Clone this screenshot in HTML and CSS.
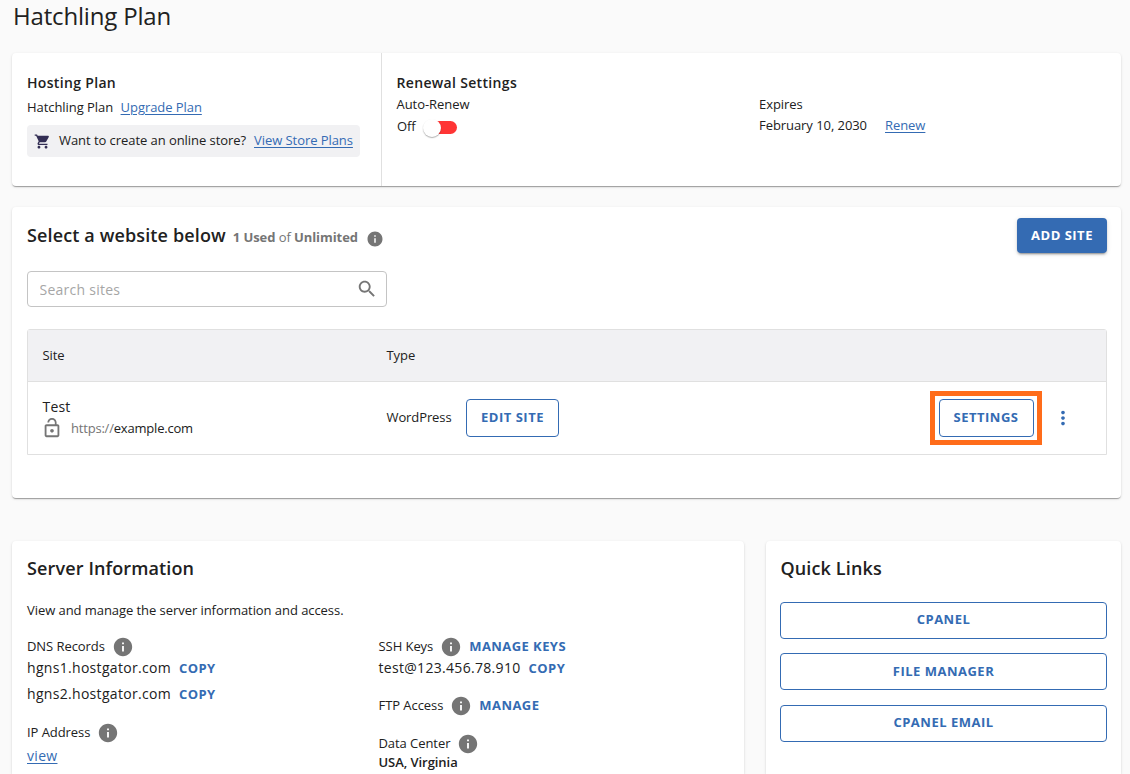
FILE: index.html
```html
<!DOCTYPE html>
<html lang="en">
<head>
<meta charset="utf-8">
<title>Hatchling Plan</title>
<link rel="stylesheet" href="styles.css">
</head>
<body>
<svg class="sprite" aria-hidden="true">
  <symbol id="info" viewBox="0 0 24 24"><path d="M12 2C6.48 2 2 6.48 2 12s4.48 10 10 10 10-4.48 10-10S17.52 2 12 2zm1 15h-2v-6h2v6zm0-8h-2V7h2v2z"/></symbol>
</svg>
<h1 class="page-title">Hatchling Plan</h1>
<main class="page">
  <section class="card plan">
    <div class="plan-hosting">
      <h3 class="subhead">Hosting Plan</h3>
      <p class="plan-name"><span>Hatchling Plan</span><a class="link" href="#">Upgrade Plan</a></p>
      <div class="store-note">
        <svg class="cart" viewBox="0 0 24 24"><path d="M7 18c-1.100 0-1.990.9-1.990 2S5.900 22 7 22s2-.9 2-2-.9-2-2-2zM1 2v2h2l3.600 7.590-1.350 2.450c-.16.28-.25.61-.25.96 0 1.100.9 2 2 2h12v-2H7.420c-.14 0-.25-.11-.25-.25l.03-.12.900-1.630h7.450c.75 0 1.410-.41 1.750-1.030l3.580-6.490c.08-.14.12-.31.12-.48 0-.55-.45-1-1-1H5.210l-.94-2H1zm16 16c-1.100 0-1.990.9-1.990 2s.89 2 1.990 2 2-.9 2-2-.9-2-2-2z"/></svg>
        <span>Want to create an online store?</span>
        <a class="link" href="#">View Store Plans</a>
      </div>
    </div>
    <div class="plan-renewal">
      <h3 class="subhead">Renewal Settings</h3>
      <div class="renewal-grid">
        <div>
          <p class="label">Auto-Renew</p>
          <div class="toggle-row"><span>Off</span><span class="toggle"><span class="thumb"></span></span></div>
        </div>
        <div>
          <p>Expires</p>
          <p class="expiry"><span>February 10, 2030</span><a class="link" href="#">Renew</a></p>
        </div>
      </div>
    </div>
  </section>

  <section class="card sites">
    <div class="sites-head">
      <h2 class="heading">Select a website below</h2>
      <span class="usage"><b>1 Used</b> of <b>Unlimited</b></span>
      <svg class="info info-sm"><use href="#info"/></svg>
      <button class="btn btn-solid">ADD SITE</button>
    </div>
    <label class="search">
      <input type="text" placeholder="Search sites">
      <svg class="search-icon" viewBox="0 0 24 24"><path d="M15.500 14h-.79l-.28-.27C15.410 12.590 16 11.110 16 9.500 16 5.910 13.090 3 9.500 3S3 5.910 3 9.500 5.910 16 9.500 16c1.610 0 3.090-.59 4.230-1.570l.27.28v.79l5 4.990L20.490 19l-4.990-5zm-6 0C7.010 14 5 11.990 5 9.500S7.010 5 9.500 5 14 7.010 14 9.500 11.990 14 9.500 14z"/></svg>
    </label>
    <div class="table">
      <div class="row row-head"><span>Site</span><span>Type</span></div>
      <div class="row row-body">
        <div class="site">
          <p class="site-name">Test</p>
          <p class="site-url">
            <svg class="lock" viewBox="0 0 24 24"><path d="M12 17c1.100 0 2-.9 2-2s-.9-2-2-2-2 .9-2 2 .9 2 2 2zm6-9h-1V6c0-2.760-2.240-5-5-5S7 3.240 7 6h1.900c0-1.710 1.390-3.100 3.100-3.100s3.100 1.390 3.100 3.100v2H6c-1.100 0-2 .9-2 2v10c0 1.100.9 2 2 2h12c1.100 0 2-.9 2-2V10c0-1.100-.9-2-2-2zm0 12H6V10h12v10z"/></svg>
            <span><span class="muted">https://</span>example.com</span>
          </p>
        </div>
        <div class="type"><span>WordPress</span><button class="btn btn-outline btn-row">EDIT SITE</button></div>
        <div class="actions">
          <div class="highlight"><button class="btn btn-outline btn-settings">SETTINGS</button></div>
          <svg class="dots" viewBox="0 0 24 24"><path d="M12 8c1.100 0 2-.9 2-2s-.9-2-2-2-2 .9-2 2 .9 2 2 2zm0 2c-1.100 0-2 .9-2 2s.9 2 2 2 2-.9 2-2-.9-2-2-2zm0 6c-1.100 0-2 .9-2 2s.9 2 2 2 2-.9 2-2-.9-2-2-2z"/></svg>
        </div>
      </div>
    </div>
  </section>

  <div class="bottom">
    <section class="card server">
      <h2 class="heading">Server Information</h2>
      <p class="intro">View and manage the server information and access.</p>
      <div class="server-grid">
        <div>
          <p class="item"><span>DNS Records</span><svg class="info"><use href="#info"/></svg></p>
          <p class="value"><span>hgns1.hostgator.com</span><a class="action">COPY</a></p>
          <p class="value value-next"><span>hgns2.hostgator.com</span><a class="action">COPY</a></p>
          <p class="item item-ip"><span>IP Address</span><svg class="info"><use href="#info"/></svg></p>
          <p class="value value-view"><a class="link" href="#">view</a></p>
        </div>
        <div>
          <p class="item"><span>SSH Keys</span><svg class="info"><use href="#info"/></svg><a class="action">MANAGE KEYS</a></p>
          <p class="value"><span class="ssh">test@123.456.78.910</span><a class="action">COPY</a></p>
          <p class="item item-ftp"><span>FTP Access</span><svg class="info"><use href="#info"/></svg><a class="action">MANAGE</a></p>
          <p class="item item-dc"><span>Data Center</span><svg class="info"><use href="#info"/></svg></p>
          <p class="location">USA, Virginia</p>
        </div>
      </div>
    </section>
    <section class="card quick">
      <h2 class="heading">Quick Links</h2>
      <div class="quick-list">
        <button class="btn btn-outline btn-first">CPANEL</button>
        <button class="btn btn-outline">FILE MANAGER</button>
        <button class="btn btn-outline">CPANEL EMAIL</button>
      </div>
    </section>
  </div>
</main>
</body>
</html>
```

FILE: styles.css
```css
* { box-sizing: border-box; }
html { height: 774px; overflow: hidden; }
body {
  margin: 0;
  height: 774px;
  overflow: hidden;
  padding: 0 9px 0 12px;
  background: #fafafa;
  color: #212121;
  font-family: "Open Sans", "Noto Sans", sans-serif;
  font-size: 13px;
  line-height: 20px;
  letter-spacing: -0.06px;
}
h1, h2, h3, p { margin: 0; }
.sprite { display: none; }
.page-title { font-size: 24px; font-weight: 400; line-height: 32px; height: 53px; padding-left: 1px; letter-spacing: -0.17px; }

.card {
  background: #fff;
  border-radius: 4px;
  box-shadow: 0 2px 1px -1px rgba(0,0,0,.2), 0 1px 1px rgba(0,0,0,.14), 0 1px 3px rgba(0,0,0,.12);
}
.heading { font-size: 18px; font-weight: 600; line-height: 24px; letter-spacing: 0.13px; }
.subhead { font-size: 14px; font-weight: 600; line-height: 20px; letter-spacing: 0.33px; }
.link { color: #346bb3; text-decoration: underline; text-underline-offset: 2px; }
.muted { color: #757575; }

.plan { display: flex; height: 133px; margin-bottom: 21px; }
.plan-hosting { width: 370px; padding: 20px 15px 0; border-right: 1px solid #e0e0e0; }
.plan-name { display: flex; gap: 7.500px; margin-top: 4px; }
.store-note {
  display: flex;
  align-items: center;
  width: 333px;
  height: 32px;
  margin-top: 8px;
  padding: 0 0 2px 7px;
  background: #f1f1f3;
  border-radius: 4px;
}
.store-note .link { margin-left: 8px; }
.cart { width: 17px; height: 17px; margin: 2px 8px 0 0; fill: #332e54; }
.plan-renewal { flex: 1; padding: 20px 15px 0; }
.renewal-grid { display: grid; grid-template-columns: 362px 1fr; margin-top: 1px; }
.plan-renewal .subhead, .plan-renewal .label { text-indent: -0.5px; }
.toggle-row { display: flex; align-items: center; gap: 7px; margin-top: 2px; }
.toggle { display: flex; align-items: center; width: 34px; height: 13px; margin-top: 3px; background: linear-gradient(to right, transparent 8px, #ff3535 8px); border-radius: 7px; }
.thumb { width: 18px; height: 18px; background: #fff; border-radius: 50%; box-shadow: 0 1px 1px rgba(0,0,0,.25), 0 1px 2px rgba(0,0,0,.08); }
.expiry { display: flex; gap: 18px; margin-top: 1px; }

.sites { height: 291px; margin-bottom: 43px; padding: 10px 14px 0 15px; }
.sites-head { display: flex; align-items: center; height: 36px; }
.usage { margin: 4px 0 0 7px; color: #757575; font-size: 13px; letter-spacing: -0.08px; }
.info { width: 22px; height: 22px; fill: #757575; flex: none; }
.info-sm { width: 18px; height: 18px; margin: 8px 0 0 8px; }
.btn {
  padding: 0 0 2px;
  border: 0;
  border-radius: 4px;
  font: 700 13px/20px "Open Sans", "Noto Sans", sans-serif;
  letter-spacing: 0.5px;
}
.btn-solid {
  width: 90px;
  height: 35px;
  padding-bottom: 1px;
  margin-left: auto;
  color: #fff;
  background: #346bb3;
  box-shadow: 0 3px 1px -2px rgba(0,0,0,.2), 0 2px 2px rgba(0,0,0,.14), 0 1px 5px rgba(0,0,0,.12);
}
.btn-outline { color: #346bb3; background: #fff; border: 1px solid #346bb3; }
.search {
  display: flex;
  align-items: center;
  width: 360px;
  height: 36px;
  margin-top: 18px;
  padding: 0 8px 0 11.500px;
  border: 1px solid #c4c4c4;
  border-radius: 4px;
}
.search input { flex: 1; padding: 2px 0 0; border: 0; outline: 0; background: none; font: 14px/20px "Open Sans", "Noto Sans", sans-serif; letter-spacing: 0.25px; }
.search input::placeholder { color: #a6a6a6; opacity: 1; }
.search-icon { width: 22px; height: 22px; margin-top: -1px; fill: #757575; }
.table { margin-top: 22px; border: 1px solid #e0e0e0; border-radius: 3px 3px 0 0; }
.row { display: grid; grid-template-columns: 344px 344px 1fr; align-items: center; padding-left: 14.500px; }
.row-head { height: 52px; padding-bottom: 1px; background: #f1f1f3; border-bottom: 1px solid #e0e0e0; font-weight: 500; }
.row-body { height: 72px; }
.site-name { font-size: 14px; line-height: 20px; letter-spacing: 0.2px; }
.site-url { display: flex; align-items: center; gap: 8px; height: 22px; letter-spacing: -0.2px; }
.lock { width: 22px; height: 22px; margin-left: -1.500px; fill: #757575; }
.type { display: flex; align-items: center; gap: 14.500px; }
.type span { margin-top: -2px; letter-spacing: -0.1px; }
.btn-row { width: 93px; height: 38px; }
.actions { display: flex; align-items: center; justify-content: flex-end; padding-right: 32px; }
.highlight { display: flex; align-items: center; justify-content: center; width: 112px; height: 54px; border: 5px solid #ff6c1a; }
.btn-settings { width: 95px; height: 38px; }
.dots { width: 22px; height: 22px; margin-left: 10px; fill: #346bb3; }

.bottom { display: grid; grid-template-columns: 732px 1fr; gap: 22px; height: 233px; }
.bottom .card { border-radius: 4px 4px 0 0; }
.server { padding: 15px 15px 0; }
.intro { margin-top: 20px; }
.server-grid { display: grid; grid-template-columns: 351.500px 1fr; margin-top: 15px; }
.item { display: flex; align-items: center; height: 22px; }
.item .info { margin: 1px 0 0 7px; }
.item .action { margin-left: 7px; }
.value { display: flex; gap: 8px; height: 22px; line-height: 22px; font-size: 14px; letter-spacing: 0.31px; }
.value-next { margin-top: 4px; }
.action { color: #346bb3; font-size: 13px; font-weight: 700; letter-spacing: 0.43px; }
.item-ip { margin-top: 16px; }
.value-view { margin-top: 2px; }
.item-ftp { margin-top: 15px; }
.item-dc { margin-top: 16px; }
.location { font-weight: 600; line-height: 16px; }
.quick { padding: 15px 14px 0; }
.quick .heading { padding-left: 0.5px; }
.quick-list { display: grid; gap: 14.400px; margin-top: 22px; }
.quick-list .btn { height: 37px; }
.quick-list .btn-first { padding-bottom: 3px; }
```
